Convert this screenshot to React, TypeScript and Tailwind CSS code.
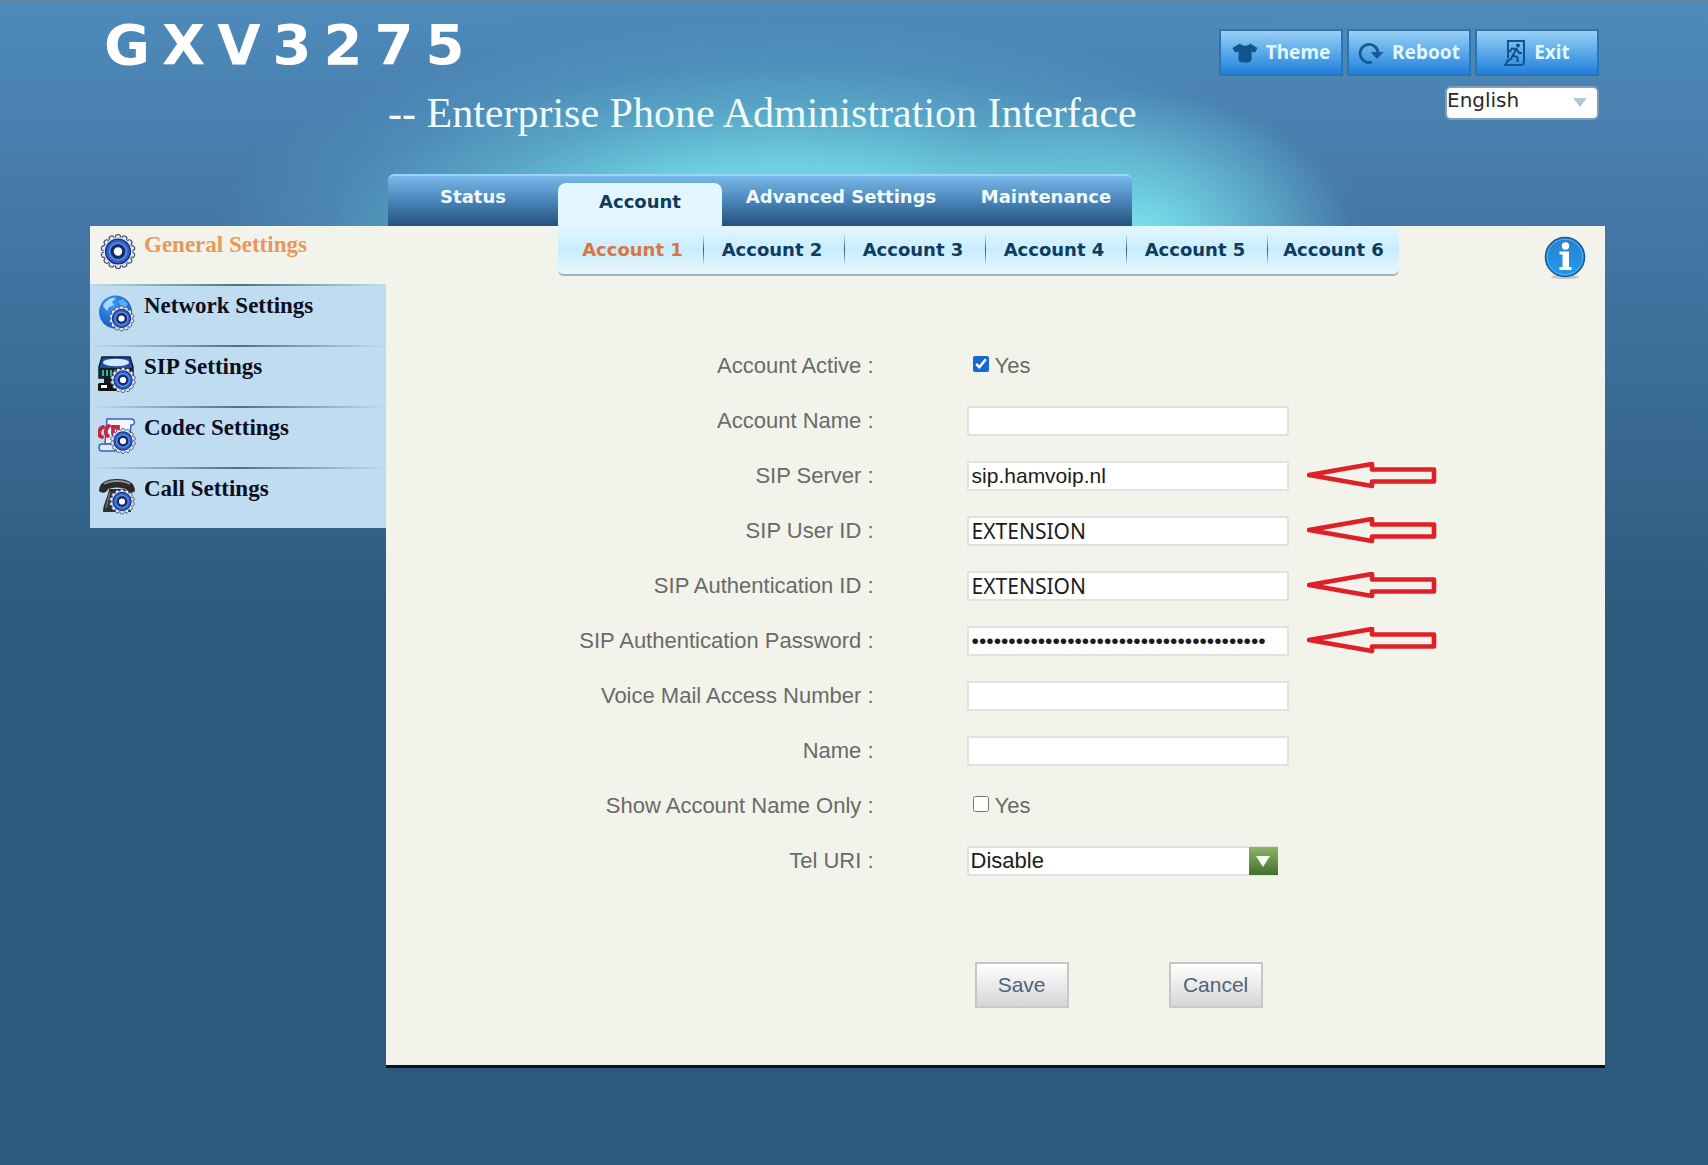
import { useState, type ReactNode } from "react";

const tabs = [
  { label: "Status", width: "w-[170px]" },
  { label: "Account", width: "w-[164px]" },
  { label: "Advanced Settings", width: "w-[238px]" },
  { label: "Maintenance", width: "w-[172px]" },
];

const accounts = ["Account 1", "Account 2", "Account 3", "Account 4", "Account 5", "Account 6"];

const teeth = Array.from({ length: 14 }, (_, i) => i * (360 / 14));

// Gear centred on cx/cy, shared by every sidebar icon
function Gear({ cx, cy, scale = 1 }: { cx: number; cy: number; scale?: number }) {
  return (
    <g transform={`translate(${cx} ${cy}) scale(${scale})`}>
      {teeth.map((angle) => (
        <circle
          key={angle}
          cx="0"
          cy="-14.4"
          r="2.6"
          transform={`rotate(${angle})`}
          fill="#e6ecfa"
          stroke="#3c4a6b"
          strokeWidth="1.1"
        />
      ))}
      <circle r="14.2" fill="#dfe7f8" />
      <circle r="12.4" fill="#2f5fc4" stroke="#1c2f78" strokeWidth="1.4" />
      <circle r="9.4" fill="#4f8ae6" />
      <circle r="7.4" fill="#16296b" />
      <circle r="4.2" fill="#ffffff" />
    </g>
  );
}

function Icon({ children }: { children: ReactNode }) {
  return (
    <svg viewBox="0 0 38 38" className="w-[38px] h-[38px] shrink-0" aria-hidden="true">
      {children}
    </svg>
  );
}

function GeneralIcon() {
  return (
    <Icon>
      <Gear cx={20} cy={18.5} />
    </Icon>
  );
}

function NetworkIcon() {
  return (
    <Icon>
      <defs>
        <radialGradient id="globe" cx="0.4" cy="0.3" r="0.8">
          <stop offset="0" stopColor="#3f9bf2" />
          <stop offset="1" stopColor="#0b52bd" />
        </radialGradient>
      </defs>
      <circle cx="17.5" cy="18" r="16.5" fill="url(#globe)" />
      <path d="M5 12 C8 6 13 3 18 4 L14 8 L16 11 L11 13 L9 17 Z" fill="#a9d8fb" />
      <path d="M20 7 L25 5 L30 10 L27 14 L23 12 Z" fill="#5aaef3" />
      <Gear cx={23.5} cy={24.5} scale={0.74} />
    </Icon>
  );
}

function SipIcon() {
  return (
    <Icon>
      <path d="M4 2 H32 L35 12 V23 H1 V12 Z" fill="#1d4f9e" stroke="#101a33" strokeWidth="1.5" />
      <ellipse cx="18" cy="7.5" rx="13" ry="3.8" fill="#d4e9fb" />
      <rect x="1" y="13" width="34" height="10" fill="#13232e" />
      <path d="M5 15 V21 M9 15 V21 M13 15 V21 M17 15 V21" stroke="#3fae8b" strokeWidth="2" />
      <path d="M6 23 H14 V28 H6 Z" fill="#1a1a1a" />
      <rect x="0" y="28" width="20" height="8" rx="1.5" fill="#111111" />
      <rect x="3" y="30" width="6" height="3" fill="#ffffff" />
      <Gear cx={25} cy={25} scale={0.74} />
    </Icon>
  );
}

function CodecIcon() {
  return (
    <Icon>
      <path
        d="M9 3 H33 C38 3 37 10 33 9 L31 28 H7 Z"
        fill="#f4f7ff"
        stroke="#3a5fc0"
        strokeWidth="1.5"
      />
      <path
        d="M4 28 H22 V35 H4 C0 35 0 28 4 28 Z"
        fill="#dfe8fb"
        stroke="#3a5fc0"
        strokeWidth="1.5"
      />
      <path
        d="M5 11 C0 13 0 20 4 21 M11 10 C7 12 7 19 10 20 M15 18 V11 H20 V14"
        fill="none"
        stroke="#c4283f"
        strokeWidth="3.8"
        strokeLinecap="round"
      />
      <Gear cx={25} cy={25} scale={0.74} />
    </Icon>
  );
}

function CallIcon() {
  return (
    <Icon>
      <path d="M11 12 H27 L33 35 H5 C5 27 10 20 11 12 Z" fill="#2d2d2d" />
      <path
        d="M1 14 C1 5 9 2 19 2 C29 2 37 5 37 14 C34 17 29 16 28 12 C22 10 16 10 10 12 C9 16 4 17 1 14 Z"
        fill="#2a2a2a"
      />
      <path d="M6 7 C13 3 25 3 32 7" fill="none" stroke="#8d8d8d" strokeWidth="2" />
      <path d="M12 15 L8 31" stroke="#6f6f6f" strokeWidth="1.5" />
      <Gear cx={24} cy={24.5} scale={0.74} />
    </Icon>
  );
}

const sidebar = [
  { label: "General Settings", icon: GeneralIcon },
  { label: "Network Settings", icon: NetworkIcon },
  { label: "SIP Settings", icon: SipIcon },
  { label: "Codec Settings", icon: CodecIcon },
  { label: "Call Settings", icon: CallIcon },
];

function ThemeIcon() {
  return (
    <svg viewBox="0 0 26 22" className="w-[26px] h-[22px]" aria-hidden="true">
      <path
        d="M8 1.5 C10 4.5 16 4.5 18 1.5 L25.5 6 L23 10.5 L19.5 9.5 V18 C19.5 21.5 6.5 21.5 6.5 18 V9.5 L3 10.5 L0.5 6 Z"
        fill="#0f5590"
      />
    </svg>
  );
}

function RebootIcon() {
  return (
    <svg viewBox="0 0 26 22" className="w-[26px] h-[22px]" aria-hidden="true">
      <path
        d="M14 20 A9 9 0 1 1 20 10"
        fill="none"
        stroke="#175a96"
        strokeWidth="2.8"
      />
      <path d="M12.5 10 H25.5 L19 17 Z" fill="#175a96" />
    </svg>
  );
}

function ExitIcon() {
  return (
    <svg viewBox="0 0 22 28" className="w-[22px] h-7" aria-hidden="true">
      <path d="M4 19 V2 H20 V23 C20 25 18 26 16 26 H1 L4 22" fill="none" stroke="#0f5590" strokeWidth="2" />
      <circle cx="14" cy="6.5" r="1.9" fill="#0f4f88" />
      <path
        d="M5.5 13 L8 9.5 L12.5 10 L15 14 H18 M12 10.5 L9 16 L13.5 18.5 V23 M9 16 L7 20 L2.5 22"
        fill="none"
        stroke="#0f4f88"
        strokeWidth="2"
      />
    </svg>
  );
}

const actions = [
  { label: "Theme", icon: ThemeIcon },
  { label: "Reboot", icon: RebootIcon },
  { label: "Exit", icon: ExitIcon },
];

function RedArrow() {
  return (
    <svg viewBox="0 0 130 28" className="w-[130px] h-7 ml-[18px] shrink-0" aria-hidden="true">
      <path
        d="M2 13 L65 2 V7.5 H127 V19.5 H65 V24 Z"
        fill="none"
        stroke="#e01f26"
        strokeWidth="4.6"
        strokeLinejoin="round"
      />
      <path d="M2 13 L22 9.5 L15 13 L22 16.5 Z" fill="#e01f26" />
    </svg>
  );
}

function InfoIcon() {
  return (
    <svg viewBox="0 0 42 44" className="w-[42px] h-11" aria-hidden="true">
      <defs>
        <linearGradient id="info" x1="0" y1="0" x2="0" y2="1">
          <stop offset="0" stopColor="#2b7fd0" />
          <stop offset="1" stopColor="#1f9bea" />
        </linearGradient>
      </defs>
      <ellipse cx="21" cy="41" rx="14" ry="2" fill="#c3c9c9" />
      <circle cx="21" cy="21" r="19.5" fill="url(#info)" stroke="#1c5a9c" strokeWidth="1.6" />
      <circle cx="21" cy="21" r="17.8" fill="none" stroke="#6fb9ee" strokeWidth="0.8" />
      <circle cx="21.5" cy="10" r="3.7" fill="#ffffff" />
      <path d="M15.5 15.5 H25 V31 H27.5 V34 H15.5 V31 H18.5 V18.5 H15.5 Z" fill="#ffffff" />
    </svg>
  );
}

function Row({ id, label, children }: { id: string; label: string; children: ReactNode }) {
  return (
    <div className="flex items-center h-[55px]">
      <label htmlFor={id} className="w-2/5 text-right text-[22px] leading-7 whitespace-nowrap">
        {label} :
      </label>
      <div className="flex items-center ml-[93px]">{children}</div>
    </div>
  );
}

type FieldProps = {
  id: string;
  label: string;
  value?: string;
  type?: string;
  arrow?: boolean;
  font?: string;
};

function Field({ id, label, value = "", type = "text", arrow, font = "" }: FieldProps) {
  return (
    <Row id={id} label={label}>
      <input
        id={id}
        type={type}
        defaultValue={value}
        className={`w-[322px] h-[30px] px-[3px] bg-white border-2 border-[#e2e3e0] text-[21px] leading-6 text-[#1c1c1c] outline-none ${font}`}
      />
      {arrow && <RedArrow />}
    </Row>
  );
}

function CheckRow({ id, label, checked }: { id: string; label: string; checked?: boolean }) {
  return (
    <Row id={id} label={label}>
      <input
        id={id}
        type="checkbox"
        defaultChecked={checked}
        className="w-4 h-4 ml-1.5 mb-1 accent-[#1668d8]"
      />
      <span className="ml-1.5 text-[22px] leading-7">Yes</span>
    </Row>
  );
}

export default function App() {
  const [section, setSection] = useState("General Settings");
  const [account, setAccount] = useState("Account 1");

  return (
    <div className="min-h-screen pl-[90px] pr-[103px] pb-[96px] border-t border-[#5f7f99] bg-[#2d597c] bg-[radial-gradient(220px_150px_at_1130px_240px,#7ce6f0_0%,#76dceaa0_40%,#62b4d000_100%),radial-gradient(580px_220px_at_790px_240px,#76e2ee_0%,#70d4e4f0_35%,#62bcd4a0_60%,#5aa8cc50_80%,#4a86b500_100%),linear-gradient(180deg,#4d8bbb_0px,#4577a5_220px,#3a6b95_400px,#2d597c_620px,#2d597c_100%)] bg-no-repeat font-['Liberation_Sans',Arial,sans-serif]">
      <header className="flex justify-between h-[173px]">
        <div>
          <h1 className="pt-3.5 pl-3.5 text-[56px] leading-[60px] font-bold tracking-[12px] text-white font-['DejaVu_Sans',Verdana,sans-serif]">
            GXV3275
          </h1>
          <p className="pt-3 pl-[298px] text-[42px] leading-[52px] whitespace-nowrap text-[#effcff] font-['Liberation_Serif',Georgia,serif]">
            -- Enterprise Phone Administration Interface
          </p>
        </div>
        <div className="flex flex-col items-end pt-7 pr-1.5">
          <div className="flex gap-1">
            {actions.map(({ label, icon: ActionIcon }) => (
              <button
                key={label}
                className="flex items-center justify-center gap-2 w-[124px] h-[47px] border-2 border-[#2c74b3] bg-linear-to-b from-[#9ad0f6] via-[#5aa9e8] to-[#1d80dc] text-[19px] text-[#e0f8ff] font-bold font-['Noto_Sans',Tahoma,sans-serif]"
              >
                <ActionIcon />
                {label}
              </button>
            ))}
          </div>
          <div className="relative mt-2.5">
            <select
              aria-label="Language"
              className="appearance-none block w-[154px] h-[34px] pb-1.5 rounded-md border-2 border-[#7d9fb8] bg-white text-xl leading-6 text-[#2a2a2a] font-['DejaVu_Sans',Verdana,sans-serif]"
            >
              <option>English</option>
            </select>
            <svg viewBox="0 0 14 9" className="absolute right-3 top-3 w-3.5 h-[9px] pointer-events-none" aria-hidden="true">
              <path d="M0 0 H14 L7 9 Z" fill="#b4c6d0" />
            </svg>
          </div>
        </div>
      </header>

      <nav className="flex items-end ml-[298px] w-[744px] h-[52px] rounded-t-md border-t-2 border-[#9cd4f5] bg-linear-to-b from-[#78b8ea] via-[#4a85b8] to-[#24527c] text-lg font-bold font-['DejaVu_Sans',Verdana,sans-serif]">
        {tabs.map(({ label, width }) => (
          <a
            key={label}
            href="#"
            className={`block shrink-0 text-center leading-6 ${width} ${
              label === "Account"
                ? "h-[43px] pt-[7px] rounded-t-lg bg-[#e3f6ff] text-[#0d3c60]"
                : "h-[42px] pt-px text-[#eefaff]"
            }`}
          >
            {label}
          </a>
        ))}
      </nav>

      <main className="flex items-start">
        <aside className="w-[296px] shrink-0">
          {sidebar.map(({ label, icon: ItemIcon }, index) => (
            <div key={label} className={section === label ? "bg-[#f2f3eb]" : "bg-[#c0dcf1]"}>
              {index > 0 && (
                <div className="h-0.5 bg-linear-to-r from-transparent via-[#4d7089] to-transparent" />
              )}
              <a
                href="#"
                onClick={() => setSection(label)}
                className={`flex gap-2 pl-2 text-[23px] leading-6 font-bold font-['Liberation_Serif',Georgia,serif] ${
                  index === 0 ? "h-[58px] pt-[7px]" : "h-[59px] pt-2"
                } ${section === label ? "text-[#e8985a]" : "text-[#0c0f1c]"}`}
              >
                <ItemIcon />
                <span>{label}</span>
              </a>
            </div>
          ))}
        </aside>

        <section className="flex-1 min-w-0 bg-[#f2f3eb] border-b-[3px] border-[#0c1218] text-[#6a6a68]">
          <div className="flex items-start justify-between pl-[172px] pr-[19px]">
            <div className="flex w-[841px] h-[50px] rounded-b-md border-b-2 border-[#9fb3bd] bg-linear-to-b from-[#e3f6ff] via-[#c8edff] to-[#eaf7fb] text-lg font-bold font-['DejaVu_Sans',Verdana,sans-serif]">
              {accounts.map((name, index) => (
                <div key={name} className={`flex items-center shrink-0 ${index === 0 ? "w-[145px] pl-1" : index === 5 ? "w-[132px]" : "w-[141px] pr-1"}`}>
                  {index > 0 && (
                    <div className="w-px h-8 bg-linear-to-b from-transparent via-[#2c5a78] to-transparent" />
                  )}
                  <a
                    href="#"
                    onClick={() => setAccount(name)}
                    className={`flex-1 text-center leading-6 ${account === name ? "text-[#dd7440]" : "text-[#0d3c60]"}`}
                  >
                    {name}
                  </a>
                </div>
              ))}
            </div>
            <button aria-label="Help" className="mt-2.5">
              <InfoIcon />
            </button>
          </div>

          <form className="pt-[58px] pb-[57px]" onSubmit={(e) => e.preventDefault()}>
            <CheckRow id="active" label="Account Active" checked />
            <Field id="accountName" label="Account Name" />
            <Field id="server" label="SIP Server" value="sip.hamvoip.nl" arrow />
            <Field id="userId" label="SIP User ID" value="EXTENSION" font="font-['Noto_Sans',sans-serif]" arrow />
            <Field id="authId" label="SIP Authentication ID" value="EXTENSION" font="font-['Noto_Sans',sans-serif]" arrow />
            <Field
              id="authPassword"
              label="SIP Authentication Password"
              type="password"
              value={"x".repeat(40)}
              arrow
            />
            <Field id="voiceMail" label="Voice Mail Access Number" />
            <Field id="name" label="Name" />
            <CheckRow id="nameOnly" label="Show Account Name Only" />
            <Row id="telUri" label="Tel URI">
              <div className="relative">
                <select
                  id="telUri"
                  className="appearance-none block w-[311px] h-[30px] pl-0.5 bg-white border-2 border-[#e2e3e0] text-[22px] leading-6 text-[#1c1c1c]"
                >
                  <option>Disable</option>
                  <option>Enable</option>
                </select>
                <span className="absolute right-0 top-px flex items-center justify-center w-[29px] h-7 bg-linear-to-b from-[#8fb56c] to-[#456f2c] pointer-events-none">
                  <svg viewBox="0 0 14 12" className="w-3.5 h-3" aria-hidden="true">
                    <path d="M0 1 H14 L7 12 Z" fill="#f4fbe9" />
                  </svg>
                </span>
              </div>
            </Row>
            <div className="flex gap-[100px] pt-[74px] ml-[40%]">
              <button type="submit" className="ml-[101px] w-[94px] h-[46px] border-2 border-[#c6c8c4] bg-linear-to-b from-white to-[#d6d6d8] text-[21px] text-[#4d6479]">
                Save
              </button>
              <button type="button" className="w-[94px] h-[46px] border-2 border-[#c6c8c4] bg-linear-to-b from-white to-[#d6d6d8] text-[21px] text-[#4d6479]">
                Cancel
              </button>
            </div>
          </form>
        </section>
      </main>
    </div>
  );
}
